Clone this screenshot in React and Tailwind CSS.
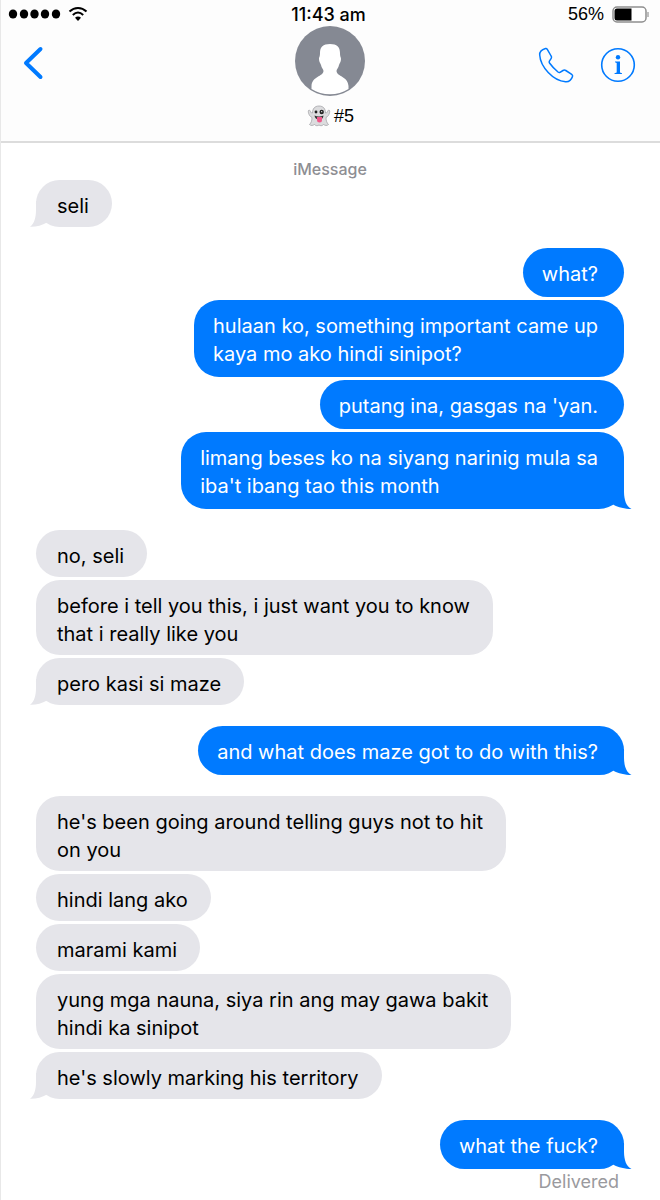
import clsx from 'clsx'

const groups = [
  { from: 'them', messages: ['seli'] },
  {
    from: 'me',
    messages: [
      'what?',
      'hulaan ko, something important came up\nkaya mo ako hindi sinipot?',
      "putang ina, gasgas na 'yan.",
      "limang beses ko na siyang narinig mula sa\niba't ibang tao this month",
    ],
  },
  {
    from: 'them',
    messages: [
      'no, seli',
      'before i tell you this, i just want you to know\nthat i really like you',
      'pero kasi si maze',
    ],
  },
  { from: 'me', messages: ['and what does maze got to do with this?'] },
  {
    from: 'them',
    messages: [
      "he's been going around telling guys not to hit\non you",
      'hindi lang ako',
      'marami kami',
      'yung mga nauna, siya rin ang may gawa bakit\nhindi ka sinipot',
      "he's slowly marking his territory",
    ],
  },
  { from: 'me', messages: ['what the fuck?'] },
]

function Tail({ mine }) {
  return mine ? (
    <svg viewBox="0 0 30 26" className="absolute -right-2 bottom-0 h-[26px] w-[30px] fill-[#007aff]" aria-hidden="true">
      <path d="M22 0V9C22.200 17 24 23 29.500 26C23 26 16 24.500 11.500 21.800L6 16V0Z" />
    </svg>
  ) : (
    <svg viewBox="0 0 30 26" className="absolute -left-1.5 bottom-0 h-[26px] w-[30px] fill-[#e5e5ea]" aria-hidden="true">
      <path d="M6 0V9C6 16 4.500 22.500 0 25.800C6 26 12 24.500 17 21.500L22 16V0Z" />
    </svg>
  )
}

function Bubble({ text, mine, last }) {
  return (
    <li
      className={clsx(
        'relative w-fit whitespace-pre-line text-xl leading-7',
        mine
          ? 'self-end rounded-[25px] bg-[#007aff] pt-3 pr-[26px] pb-[9px] pl-[19px] text-white'
          : 'rounded-[24px] bg-[#e5e5ea] pt-3 pr-[23px] pb-[7px] pl-[21px] text-black'
      )}
    >
      {last && <Tail mine={mine} />}
      <span className="relative">{text}</span>
    </li>
  )
}

function StatusBar() {
  return (
    <div className="grid h-[26px] grid-cols-3 items-end pr-[11px] pl-[7px] text-lg leading-[22px]">
      <div className="flex h-6 items-center gap-[7px]">
        <svg viewBox="0 0 53 10" className="h-[10px] w-[53px]" aria-label="Signal">
          {[5, 16, 26.5, 37, 48].map((x) => (
            <ellipse key={x} cx={x} cy="5" rx="4.200" ry="4.500" />
          ))}
        </svg>
        <svg viewBox="0 0 20 16" className="h-4 w-5" fill="none" stroke="black" strokeWidth="2" aria-label="Wi-Fi">
          <path d="M1.500 5.500C6.500 .8 13.500 .8 18.500 5.500" />
          <path d="M4.800 9C8 6 12 6 15.200 9" />
          <path d="M7 11.800C8.800 10 11.200 10 13 11.800L10 15Z" fill="black" stroke="none" />
        </svg>
      </div>
      <div className="text-center font-medium">11:43 am</div>
      <div className="flex h-6 items-center justify-end gap-2 font-['Liberation_Sans',sans-serif]">
        56%
        <svg viewBox="0 0 37 17" className="h-[17px] w-[37px]" aria-label="Battery">
          <rect x="1" y="1" width="33" height="15" rx="4" fill="white" stroke="#8e8e8e" strokeWidth="1.500" />
          <path d="M5 2.500H19.500V14.500H5Q2.500 14.500 2.500 12V5Q2.500 2.500 5 2.500Z" />
          <path d="M36 6V11" stroke="#aaa" strokeWidth="1.500" />
        </svg>
      </div>
    </div>
  )
}

function Ghost() {
  return (
    <svg viewBox="0 0 24 22" className="h-[22px] w-6" aria-label="Ghost">
      <path
        d="M12 1C7.500 1 5.500 4 5.500 8C4 9 3.500 5 2 5C.5 5.500 1.500 11 5 12.500C5 16 4 18 2.500 19.500C4 21 6 20.500 7.500 19.500C9 21 10.500 21 12 20C13.500 21 15 21 16.500 19.500C18 20.500 20 21 21.500 19.500C20 18 19 16 19 12.500C22.500 11 23.500 5.500 22 5C20.500 5 20 9 18.500 8C18.500 4 16.500 1 12 1Z"
        fill="#dcdcde"
        stroke="#9b9b9f"
        strokeWidth=".7"
      />
      <circle cx="9" cy="7" r="1.400" fill="#222" />
      <circle cx="14.700" cy="7" r="2.200" fill="#222" />
      <circle cx="14.700" cy="6.700" r=".6" fill="#fff" />
      <path d="M7.500 10.500Q12 12.500 16.500 10.500Q16 15 12 14.500Q8 14.500 7.500 10.500Z" fill="#333" />
      <path d="M10 12H15V15Q15 17.500 12.500 17.500Q10 17.500 10 15Z" fill="#f0588a" />
    </svg>
  )
}

function Header() {
  return (
    <header className="border-b-2 border-[#dcdcdc] bg-[#fdfdfd]">
      <StatusBar />
      <div className="grid h-[115px] grid-cols-3 items-start text-[#007aff]">
        <button type="button" aria-label="Back" className="mt-5 ml-[21px] w-fit">
          <svg viewBox="0 0 22 34" className="h-[34px] w-[22px]" fill="none" stroke="#007aff" strokeWidth="4" strokeLinecap="round" strokeLinejoin="round">
            <path d="M18.500 3L4 17L18.500 31" />
          </svg>
        </button>
        <div className="flex flex-col items-center text-black">
          <svg viewBox="0 0 70 70" className="size-[70px]" aria-label="Contact photo">
            <circle cx="35" cy="35" r="35" fill="#858993" />
            <path
              d="M35 18C28 18 25 21 25 27C25 31 24 31 24 33C24 36 25.500 37 26 39C26.500 42 28.500 43 28.500 45C28 51 17 50 16.500 60V63C27 70 43 70 53.500 63V60C53 50 42 51 41.500 45C41.500 43 43.500 42 44 39C44.500 37 46 36 46 33C46 31 45 31 45 27C45 21 42 18 35 18Z"
              fill="#fff"
            />
          </svg>
          <div className="mt-2 flex items-center gap-[3px] text-lg leading-6">
            <Ghost />
            <span className="font-['Liberation_Sans',sans-serif]">#5</span>
          </div>
        </div>
        <div className="mt-[21px] mr-6 flex justify-end gap-[26px]">
          <button type="button" aria-label="Call">
            <svg viewBox="0 0 36 36" className="size-9" fill="none" stroke="#007aff" strokeWidth="1.500" strokeLinejoin="round">
              <path d="M7.500 1.500C4 2.500 1.500 5 1.700 8C2.500 20 15 33.500 27.500 34.700C31 35 33.500 32.500 34.500 29.500C34.900 28.500 34.500 28 33.700 27.400L27.800 23.500C26.800 22.900 25.800 23 25 23.500L22 25.300C21.300 25.700 20.700 25.500 20 25C17 22.500 14 19.500 11.500 16C11 15.300 11 14.800 11.400 14.200L13.200 11.400C13.700 10.600 13.700 9.800 13.100 9L9.300 2.300C8.800 1.500 8.300 1.300 7.500 1.500Z" />
            </svg>
          </button>
          <button type="button" aria-label="Details">
            <svg viewBox="0 0 36 36" className="size-9" fill="#007aff">
              <circle cx="18" cy="18" r="16.300" fill="none" stroke="#007aff" strokeWidth="1.600" />
              <circle cx="18" cy="10.300" r="2.200" />
              <path d="M15 14.500H20V25.500L22 26.200V27H14.500V26.200L16.700 25.500V15.900L15 15.300Z" />
            </svg>
          </button>
        </div>
      </div>
    </header>
  )
}

export default function App() {
  return (
    <div className="min-h-screen border-l border-[#e8e8e8] bg-white font-['Inter','Liberation_Sans',sans-serif] text-black">
      <Header />
      <main className="pr-9 pl-[35px]">
        <h1 className="pt-4 pb-[1px] text-center text-base leading-5 font-medium text-[#8e8e93]">iMessage</h1>
        <div className="flex flex-col gap-[21px]">
          {groups.map((group, i) => (
            <ul key={i} className="flex flex-col gap-[3px]">
              {group.messages.map((text, j) => (
                <Bubble
                  key={text}
                  text={text}
                  mine={group.from === 'me'}
                  last={j === group.messages.length - 1}
                />
              ))}
            </ul>
          ))}
        </div>
        <p className="pt-[3px] pr-[5px] text-right text-lg leading-5 text-[#9a9a9e]">Delivered</p>
      </main>
    </div>
  )
}
